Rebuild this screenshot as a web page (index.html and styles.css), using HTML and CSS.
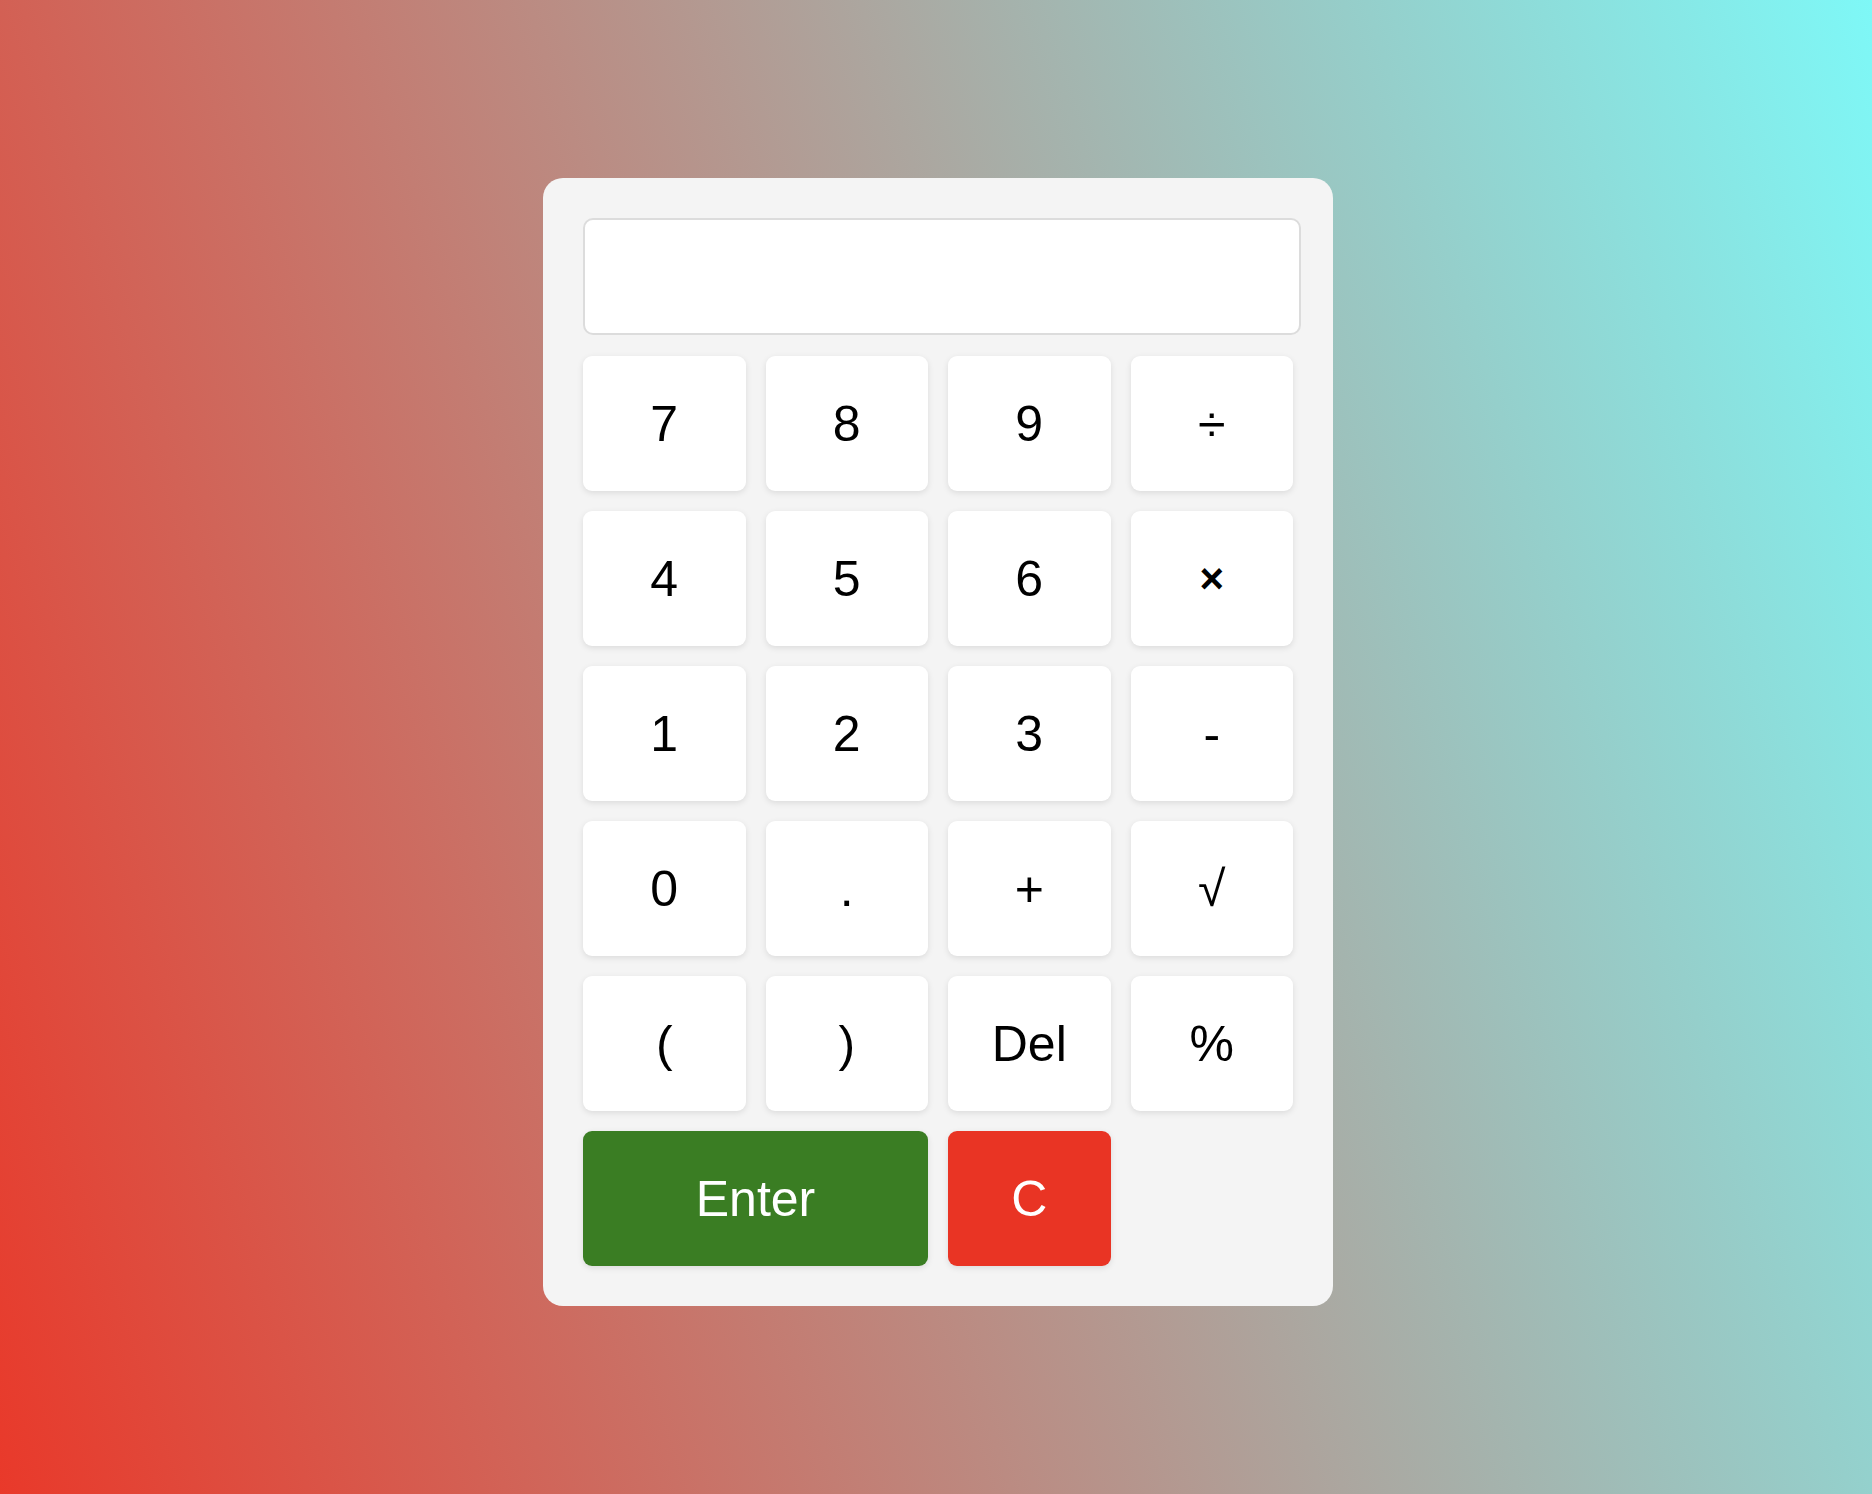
FILE: index.html
```html
<!DOCTYPE html>
<html lang="en">
<head>
<meta charset="utf-8">
<title>Calculator</title>
<link rel="stylesheet" href="styles.css">
</head>
<body>
<main class="calculator">
  <input class="display" type="text" readonly>
  <div class="keys">
    <button class="key">7</button>
    <button class="key">8</button>
    <button class="key">9</button>
    <button class="key">÷</button>
    <button class="key">4</button>
    <button class="key">5</button>
    <button class="key">6</button>
    <button class="key key-times">×</button>
    <button class="key">1</button>
    <button class="key">2</button>
    <button class="key">3</button>
    <button class="key">-</button>
    <button class="key">0</button>
    <button class="key">.</button>
    <button class="key">+</button>
    <button class="key">√</button>
    <button class="key">(</button>
    <button class="key">)</button>
    <button class="key">Del</button>
    <button class="key">%</button>
    <button class="key key-enter">Enter</button>
    <button class="key key-clear">C</button>
  </div>
</main>
</body>
</html>
```
FILE: styles.css
```css
html, body {
  margin: 0;
  height: 100%;
}

body {
  display: flex;
  align-items: center;
  justify-content: center;
  box-sizing: border-box;
  padding: 0 0 10px 4px;
  background: linear-gradient(72deg, #e9392a 0%, #7ef8f7 100%);
  font-family: "Liberation Sans", Arial, sans-serif;
}

.calculator {
  width: 710px;
  padding: 40px;
  background: #f4f4f4;
  border-radius: 20px;
}

.display {
  display: block;
  box-sizing: border-box;
  width: calc(100% + 8px);
  height: 117px;
  margin: 0 0 21px;
  padding: 0 16px;
  border: 2px solid #dcdcdc;
  border-radius: 10px;
  background: #fff;
  font-family: "Liberation Sans", Arial, sans-serif;
  font-size: 48px;
  text-align: right;
  outline: none;
}

.keys {
  display: grid;
  grid-template-columns: repeat(4, 1fr);
  grid-auto-rows: 135px;
  gap: 20px;
}

.key {
  border: none;
  border-radius: 9px;
  background: #fff;
  color: #000;
  font-family: "Liberation Sans", Arial, sans-serif;
  font-size: 50px;
  box-shadow: 0 2px 6px rgba(0, 0, 0, 0.1);
  padding: 0;
  cursor: pointer;
}

.key-times {
  font-size: 42px;
  font-weight: bold;
}

.key-enter {
  grid-column: span 2;
  background: #3a7d23;
  color: #fff;
}

.key-clear {
  background: #e93424;
  color: #fff;
}
```
